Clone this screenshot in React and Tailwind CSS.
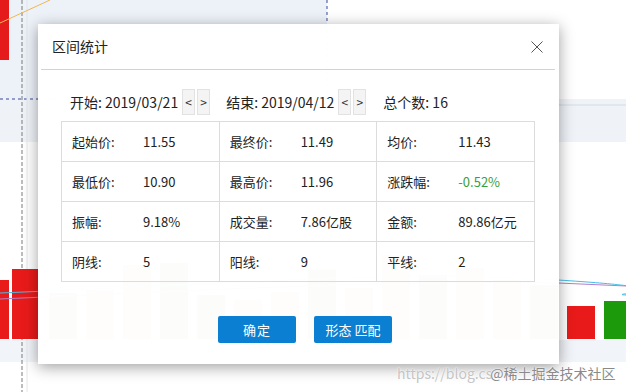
import React from 'react';

const bars = [
  [-19, 280, 'r'], [12, 269, 'r'], [49, 293, 'g'], [86, 290, 'r'], [123, 265, 'r'],
  [160, 263, 'g'], [197, 295, 'g'], [234, 300, 'r'], [271, 292, 'r'], [308, 270, 'g'],
  [345, 288, 'r'], [382, 255, 'r'], [419, 275, 'g'], [456, 268, 'r'], [493, 280, 'r'],
  [530, 285, 'g'], [567, 306, 'r'], [604, 301, 'g'],
];

const rows = [
  [['起始价:', '11.55'], ['最终价:', '11.49'], ['均价:', '11.43']],
  [['最低价:', '10.90'], ['最高价:', '11.96'], ['涨跌幅:', '-0.52%', true]],
  [['振幅:', '9.18%'], ['成交量:', '7.86亿股'], ['金额:', '89.86亿元']],
  [['阴线:', '5'], ['阳线:', '9'], ['平线:', '2']],
];

const Chart = () => (
  <svg width="626" height="392" viewBox="0 0 626 392" className="block">
    <rect x="0" y="0" width="626" height="392" fill="#ffffff" />
    <rect x="0" y="0" width="327" height="99" fill="#edf2f9" />
    <rect x="0" y="99" width="626" height="43" fill="#eff3f8" />
    <line x1="327" y1="105" x2="626" y2="105" stroke="#d5dae2" />
    <rect x="0" y="340" width="626" height="22" fill="#f1f4f8" />
    <line x1="0" y1="99" x2="327" y2="99" stroke="#3a4799" strokeDasharray="3 3" />
    <line x1="327" y1="0" x2="327" y2="99" stroke="#3a4799" strokeDasharray="3 3" />
    <line x1="22" y1="0" x2="22" y2="392" stroke="#7a7a7a" strokeDasharray="4 2" />
    <line x1="27" y1="0" x2="27" y2="392" stroke="#e3e6ea" />
    <rect x="0" y="0" width="9" height="60" fill="#e51b1b" />
    <line x1="0" y1="23" x2="50" y2="0" stroke="#efb552" />
    {bars.map(([x, top, c]) => (
      <rect key={x} x={x} y={top} width="28" height={339 - top} fill={c === 'r' ? '#e91a1a' : '#1d9a0c'} />
    ))}
    <path d="M0 293 C 200 285, 400 270, 558 280 S 600 294, 626 295" fill="none" stroke="#47bde6" />
    <path d="M0 299 C 200 290, 400 280, 558 283 L 626 286" fill="none" stroke="#b47fc9" />
  </svg>
);

const NavBtn = ({ children }) => (
  <span className="flex h-[26px] w-[13px] items-center justify-center border border-[#e2e2e2] bg-[#f4f4f4] text-[12px] text-[#333]">
    {children}
  </span>
);

export default function App() {
  return (
    <div className="relative h-[392px] w-[626px] overflow-hidden font-['Noto_Sans_CJK_SC','Noto_Sans',sans-serif]">
      <Chart />

      <div className="absolute left-[38px] top-[24px] flex h-[340px] w-[521px] flex-col bg-white/[0.985] shadow-[0_3px_14px_rgba(0,0,0,0.38)]">
        <div className="flex h-[45px] items-center justify-between pl-[14px] pr-[16px]">
          <span className="text-[14px] text-[#222]">区间统计</span>
          <svg width="12" height="12" viewBox="0 0 12 12">
            <path d="M0.5 0.5 L11.5 11.5 M11.5 0.5 L0.5 11.5" stroke="#555" strokeWidth="1" fill="none" />
          </svg>
        </div>
        <div className="ml-[3px] mr-[4px] h-px bg-[#d3d3d3]" />

        <div className="mt-[19px] flex h-[26px] items-center pl-[32px] text-[14px] text-[#222]">
          <span>开始: 2019/03/21</span>
          <div className="ml-[4px] flex gap-[2px]">
            <NavBtn>&lt;</NavBtn>
            <NavBtn>&gt;</NavBtn>
          </div>
          <span className="ml-[16px]">结束: 2019/04/12</span>
          <div className="ml-[4px] flex gap-[2px]">
            <NavBtn>&lt;</NavBtn>
            <NavBtn>&gt;</NavBtn>
          </div>
          <span className="ml-[17px]">总个数: 16</span>
        </div>

        <div className="ml-[23px] mt-[6px] w-[474px] border-r border-b border-[#dcdcdc] text-[13px] text-[#222]">
          {rows.map((row, i) => (
            <div key={i} className="grid h-[40px] grid-cols-3">
              {row.map(([label, value, green]) => (
                <div key={label} className="flex items-center border-l border-t border-[#dcdcdc] pl-[10px]">
                  <span className="w-[71px]">{label}</span>
                  <span className={green ? 'text-[#3a9f34]' : ''}>{value}</span>
                </div>
              ))}
            </div>
          ))}
        </div>

        <div className="mt-[34px] flex justify-center gap-[18px] pl-[13px] text-[13px] text-white">
          <span className="flex h-[27px] w-[78px] items-center justify-center rounded-[2px] bg-[#0b7fd2] tracking-[1px]">确定</span>
          <span className="flex h-[27px] w-[78px] items-center justify-center rounded-[2px] bg-[#0b7fd2]">形态 匹配</span>
        </div>
      </div>

      <div className="absolute left-[397px] top-[363px] flex whitespace-nowrap text-[14px] leading-[20px] [text-shadow:0_0_2px_#fff,0_0_1px_#fff]">
        <span className="text-[#c4c4c4]">https://blog.cs</span>
        <span className="-ml-[2px] text-[#8a8a8a]">@稀土掘金技术社区</span>
      </div>
    </div>
  );
}
